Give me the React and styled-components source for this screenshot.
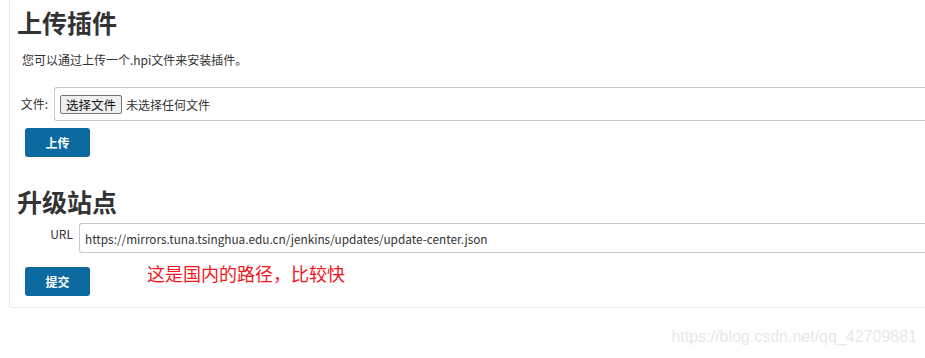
import styled, { createGlobalStyle } from "styled-components";

// --------------------------------------------------

const GlobalStyle = createGlobalStyle`
	html, body {
		margin: 0;
		padding: 0;
		background: #fff;
		overflow: hidden;
	}
	body {
		font-family: "Noto Sans CJK SC", "Liberation Sans", sans-serif;
		color: #333;
	}
`;

const Page = styled.div`
	position: relative;
	width: 925px;
	height: 358px;
	overflow: hidden;
`;

const Panel = styled.div`
	margin-left: 9px;
	width: 960px;
	height: 308px;
	box-sizing: border-box;
	border-left: 1px solid #e6e9eb;
	border-bottom: 1px solid #e6e9eb;
	border-bottom-left-radius: 4px;
	padding-left: 7px;
`;

const Title = styled.h1`
	margin: 0;
	padding-top: ${p => p.$top}px;
	font-size: 25px;
	line-height: 30px;
	font-weight: 700;
	color: #333;
`;

const Para = styled.div`
	margin: 15px 0 0 5px;
	font-size: 12px;
	line-height: 16px;
	color: #333;
`;

const Row = styled.div`
	display: flex;
	align-items: ${p => p.$align || "center"};
	margin-top: ${p => p.$top}px;
`;

const Label = styled.div`
	width: ${p => p.$w}px;
	text-align: right;
	padding-right: 6px;
	box-sizing: border-box;
	font-size: 12px;
	line-height: 16px;
	padding-top: ${p => p.$pt || 0}px;
	color: #333;
`;

const Field = styled.div`
	flex: 1;
	height: ${p => p.$h}px;
	box-sizing: border-box;
	border: 1px solid #ccc;
	border-right: none;
	border-radius: 3px 0 0 3px;
	display: flex;
	align-items: center;
	padding-left: 5px;
	font-size: ${p => p.$fs || 12}px;
	color: #333;
`;

const FileButton = styled.span`
	display: inline-flex;
	align-items: center;
	height: 19px;
	padding: 0 5px;
	box-sizing: border-box;
	border: 1px solid #767676;
	border-radius: 2px;
	background: #efefef;
	font-size: 12.5px;
	color: #111;
	margin-right: 4px;
`;

const Button = styled.button`
	margin: 0 0 0 8px;
	width: 65px;
	height: 29px;
	border: none;
	border-radius: 3px;
	background: #0d6aa1;
	color: #fff;
	font-family: "Noto Sans CJK SC", sans-serif;
	font-size: 12px;
	font-weight: 700;
	padding: 0;
	flex-shrink: 0;
`;

const Note = styled.div`
	margin-left: 57px;
	font-size: 18px;
	line-height: 20px;
	color: #f0171e;
	align-self: flex-start;
	margin-top: -4px;
`;

const Watermark = styled.div`
	position: absolute;
	right: 8px;
	bottom: 12px;
	font-family: "Liberation Sans", sans-serif;
	font-size: 16px;
	color: #e8e8e8;
`;

// --------------------------------------------------

const App = () => (
	<Page>
		<GlobalStyle />
		<Panel>
			<Title $top={7}>上传插件</Title>
			<Para>您可以通过上传一个.hpi文件来安装插件。</Para>

			<Row $top={19}>
				<Label $w={37}>文件:</Label>
				<Field $h={34}>
					<FileButton>选择文件</FileButton>
					未选择任何文件
				</Field>
			</Row>

			<Row $top={7}>
				<Button>上传</Button>
			</Row>

			<Title $top={29}>升级站点</Title>

			<Row $top={7} $align="flex-start">
				<Label $w={62} $pt={3}>URL</Label>
				<Field $h={30} $fs={11.8}>
					https://mirrors.tuna.tsinghua.edu.cn/jenkins/updates/update-center.json
				</Field>
			</Row>

			<Row $top={14}>
				<Button>提交</Button>
				<Note>这是国内的路径，比较快</Note>
			</Row>
		</Panel>
		<Watermark>https://blog.csdn.net/qq_42709881</Watermark>
	</Page>
);

export default App;
